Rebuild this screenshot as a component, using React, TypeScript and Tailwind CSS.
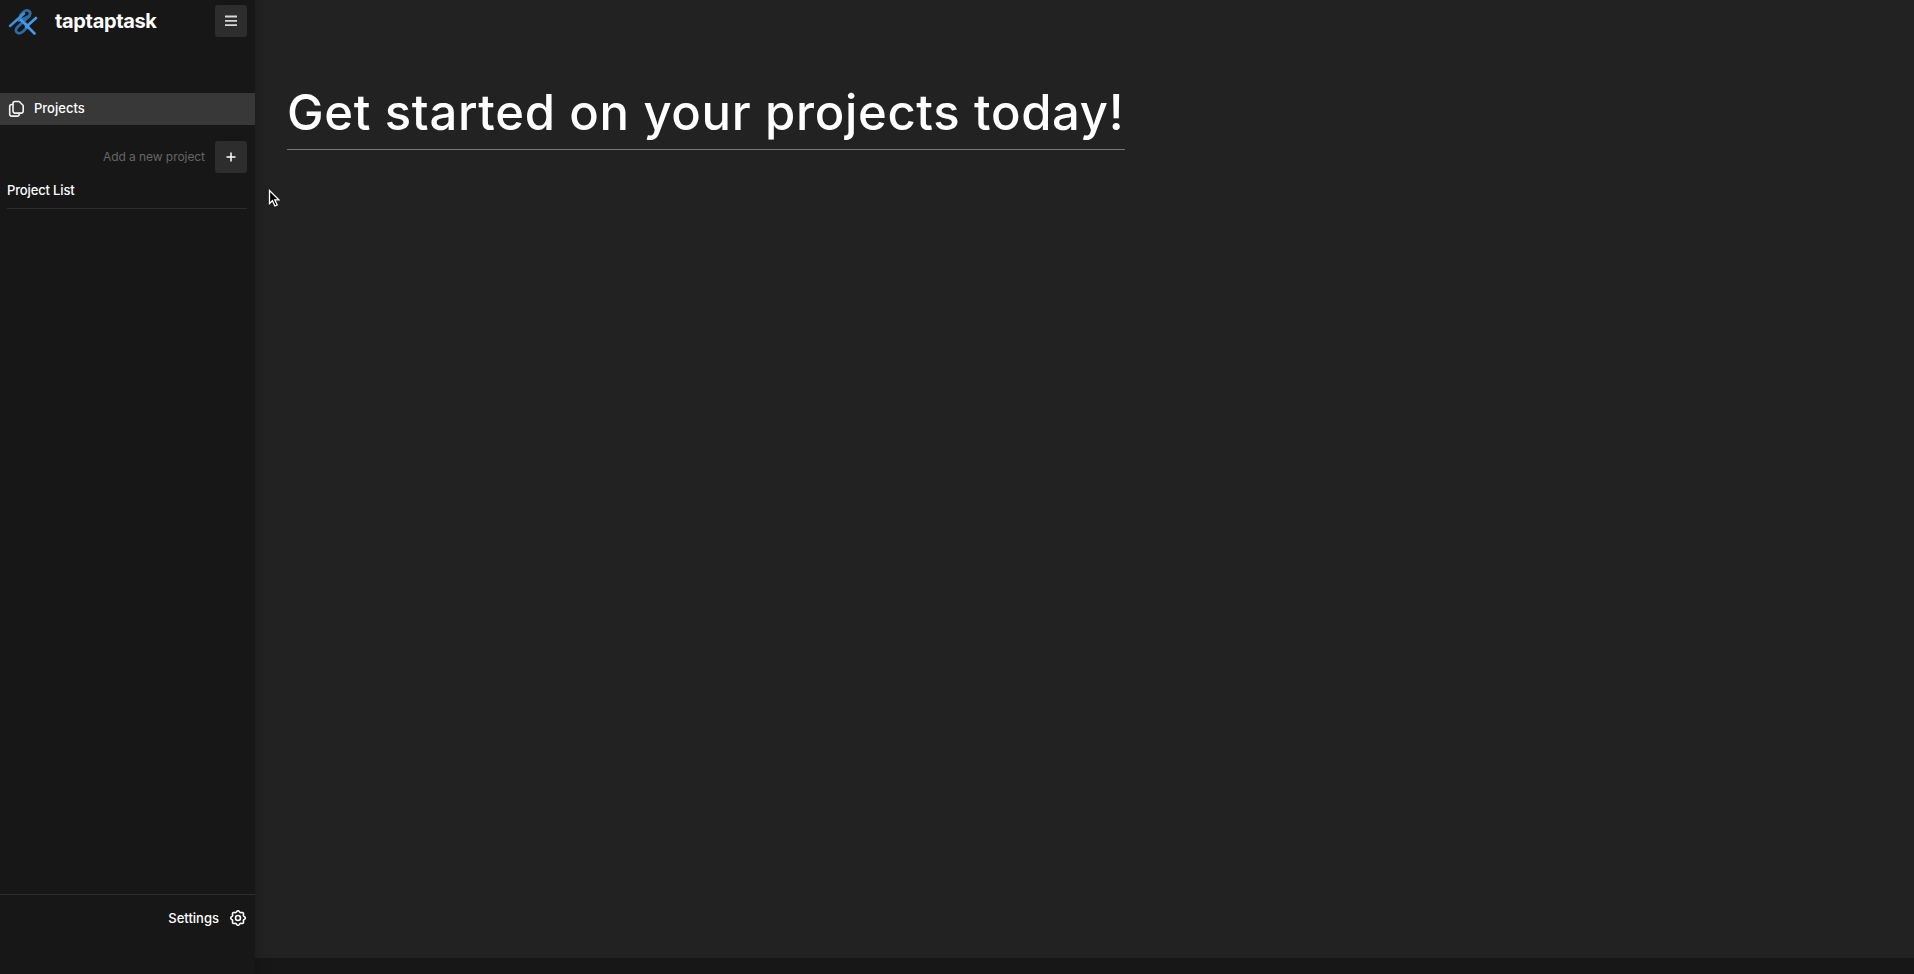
const gearPath = (() => {
  const points: string[] = [];
  for (let i = 0; i <= 96; i++) {
    const a = (i / 96) * Math.PI * 2;
    const r = 6.6 + 0.7 * Math.cos(8 * a);
    points.push(`${(9 + r * Math.cos(a)).toFixed(2)} ${(9 + r * Math.sin(a)).toFixed(2)}`);
  }
  return `M${points.join("L")}Z`;
})();

function Logo() {
  return (
    <svg className="-mt-[4px] h-9 w-10 shrink-0" viewBox="0 0 40 36" fill="none" strokeLinecap="round" strokeLinejoin="round">
      <path d="M19 19.5 28.5 15.500Q31.5 12.500 29.5 10.3Q26.5 8.300 23.500 11L20.500 14Q19.500 16 21 18L28 25" stroke="#2c6ca6" strokeWidth="2.7" />
      <path d="M29.500 15 17.500 26Q14.500 29.500 17 31.500Q19.500 33.500 23 30.500L28 25.500" stroke="#2c6ca6" strokeWidth="2.7" />
      <path d="M10 25 24 12.500" stroke="#4190d4" strokeWidth="2.5" />
      <path d="M21 19 34.500 32.500" stroke="#459bea" strokeWidth="2.6" />
      <path d="M36 17 26 26" stroke="#459bea" strokeWidth="2.6" />
    </svg>
  );
}

function Header() {
  return (
    <header className="flex h-[42px] items-center pr-2">
      <Logo />
      <h1 className="ml-[15px] flex-1 text-[20px] leading-7 font-bold tracking-[-0.35px]">taptaptask</h1>
      <button aria-label="Menu" className="flex size-8 items-center justify-center rounded-[3px] bg-[#2d2d2d]">
        <svg className="size-3" viewBox="0 0 12 12" stroke="#d7d7d7" strokeWidth="1.8">
          <path d="M0 1.500H12M0 5.900H12M0 10.200H12" />
        </svg>
      </button>
    </header>
  );
}

function Sidebar() {
  return (
    <aside className="z-10 flex h-full w-[255px] shrink-0 flex-col bg-[#171717] shadow-[4px_0_12px_rgba(0,0,0,0.15)]">
      <Header />
      <nav className="mt-[51px] flex h-8 items-center bg-[#383838] pl-2">
        <svg className="size-[18px]" viewBox="0 0 18 18" fill="none" stroke="#f2f2f2" strokeWidth="1.6" strokeLinejoin="round" strokeLinecap="round">
          <path d="M7 1.500h4.200l4 4v5.600a2 2 0 0 1-2 2H7a2 2 0 0 1-2-2V3.500a2 2 0 0 1 2-2Z" />
          <path d="M4.800 4.500H3.700a2 2 0 0 0-2 2v7.600a2 2 0 0 0 2 2h5.600a2 2 0 0 0 2-2v-.8" />
        </svg>
        <span className="ml-2 text-[13px] font-medium">Projects</span>
      </nav>
      <div className="mt-4 flex h-8 items-center justify-end gap-2.5 pr-2">
        <span className="text-[12px] tracking-[-0.06px] text-[#666]">Add a new project</span>
        <button aria-label="Add project" className="flex size-8 items-center justify-center rounded-[3px] bg-[#2d2d2d]">
          <svg className="size-3" viewBox="0 0 12 12" stroke="#fff" strokeWidth="1.5">
            <path d="M6 1.500V10.500M1.500 6H10.500" />
          </svg>
        </button>
      </div>
      <section className="mx-[7px] mr-2 mt-[7px] h-[29px] border-b border-[#2d2d2d]">
        <h2 className="text-[13px] leading-5 font-medium tracking-[-0.15px]">Project List</h2>
      </section>
      <footer className="mt-auto flex h-20 items-start justify-end border-t border-[#2d2d2d] pr-[8.5px] pt-[13px]">
        <span className="mr-[9.5px] text-[13px] leading-5 font-medium">Settings</span>
        <svg className="mt-px size-[18px]" viewBox="0 0 18 18" fill="none" stroke="#fff" strokeWidth="1.6">
          <path d={gearPath} strokeLinejoin="round" />
          <circle cx="9" cy="9" r="2.500" />
        </svg>
      </footer>
    </aside>
  );
}

export default function App() {
  return (
    <div className="relative flex h-screen w-full overflow-hidden bg-[#171717] font-['Inter',sans-serif] text-white">
      <Sidebar />
      <main className="h-[958px] flex-1 bg-[#222] pl-8 pt-[77px]">
        <h2 className="h-[73px] w-[838px] whitespace-nowrap border-b border-[#777] text-[49px] leading-[71px] font-medium tracking-[0.66px]">
          Get started on your projects today!
        </h2>
      </main>
      <svg className="absolute left-[268px] top-[189px] z-20 h-[19px] w-3" viewBox="0 0 12 19" fill="#000" stroke="#fff" strokeWidth="1.3" strokeLinejoin="miter">
        <path d="M1.500 1.500V14.500L4.500 11.700L6.900 17L9.200 16L6.800 10.800H10.800Z" />
      </svg>
    </div>
  );
}
